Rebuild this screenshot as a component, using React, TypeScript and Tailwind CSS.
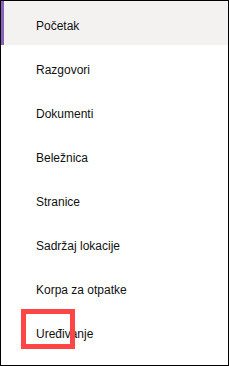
const items = [
  "Početak",
  "Razgovori",
  "Dokumenti",
  "Beležnica",
  "Stranice",
  "Sadržaj lokacije",
  "Korpa za otpatke",
  "Uređivanje",
]

const App = () => {
  return (
    <div className="h-[366px] w-[229px] border border-black bg-white font-['Liberation_Sans',Arial,sans-serif] text-[12px] text-[#111]">
      <ul className="flex flex-col">
        {items.map((label, i) => (
          <li
            key={label}
            className={
              i === 0
                ? "flex h-[44px] items-center border-l-[3px] border-[#8764b8] bg-[#f3f2f1] pl-[32px] pt-[5px]"
                : "flex h-[44px] items-center pl-[35px] pt-[5px]"
            }
          >
            {i === items.length - 1 ? (
              <span className="relative">
                {label}
                <span className="absolute left-[-15px] top-[-16px] h-[40px] w-[54px] border-[5px] border-[#ff4545]" />
              </span>
            ) : (
              label
            )}
          </li>
        ))}
      </ul>
    </div>
  )
}

export default App
